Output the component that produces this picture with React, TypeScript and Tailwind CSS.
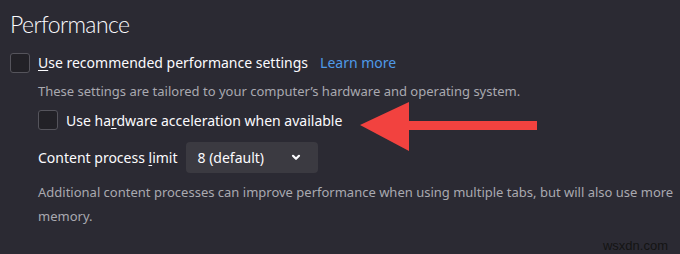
export default function App() {
  return (
    <div
      className="relative h-[254px] w-[680px] overflow-hidden bg-[#2b2a33] text-[#fbfbfe]"
      style={{ fontFamily: '"Noto Sans", "Open Sans", sans-serif' }}
    >
      <div className="pl-[10px] pt-[9px]">
        <h1
          className="text-[23px] font-light leading-[30px] tracking-[-0.6px]"
          style={{ fontFamily: 'Lato, "Noto Sans", sans-serif' }}
        >
          Performance
        </h1>

        <div className="mt-[13px] flex items-center">
          <span className="h-[20px] w-[20px] rounded-[3px] border border-[#55545c] bg-[#222127]" />
          <span className="ml-[8px] text-[14px]">
            <span className="underline underline-offset-2">U</span>se recommended performance settings
          </span>
          <a className="ml-[12px] text-[14px] text-[#4f9ae8]">Learn more</a>
        </div>

        <p className="ml-[28px] mt-[9px] text-[13px] text-[#a9a9b0]">
          These settings are tailored to your computer’s hardware and operating system.
        </p>

        <div className="ml-[28px] mt-[8px] flex items-center">
          <span className="h-[20px] w-[20px] rounded-[3px] border border-[#55545c] bg-[#222127]" />
          <span className="ml-[8px] text-[14px]">
            Use ha<span className="underline underline-offset-2">r</span>dware acceleration when available
          </span>
        </div>

        <div className="ml-[28px] mt-[11px] flex items-center">
          <span className="text-[14px]">
            Content process <span className="underline underline-offset-2">l</span>imit
          </span>
          <div className="ml-[8px] flex h-[31px] w-[132px] items-center rounded-[4px] bg-[#3b3a41] pl-[12px] pr-[17px]">
            <span className="text-[14px]">8 (default)</span>
            <svg className="ml-auto" width="10" height="7" viewBox="0 0 10 7">
              <path d="M2 1.8 L5 4.8 L8 1.8" fill="none" stroke="#fbfbfe" strokeWidth="2.2" strokeLinecap="round" strokeLinejoin="round" />
            </svg>
          </div>
        </div>

        <p className="ml-[28px] mt-[7px] text-[13px] leading-[24px] text-[#a9a9b0]">
          Additional content processes can improve performance when using multiple tabs, but will also use more
          <br />
          memory.
        </p>
      </div>

      <svg className="absolute left-0 top-0" width="680" height="254" viewBox="0 0 680 254">
        <path d="M360 125 L409 102 L409 121 L537 121 L537 130 L409 130 L409 151 Z" fill="#f2423f" />
      </svg>

      <span
        className="absolute right-[12px] top-[236px] text-[13px] text-[#141414]"
        style={{ fontFamily: '"Liberation Sans", sans-serif' }}
      >
        wsxdn.com
      </span>
    </div>
  );
}
